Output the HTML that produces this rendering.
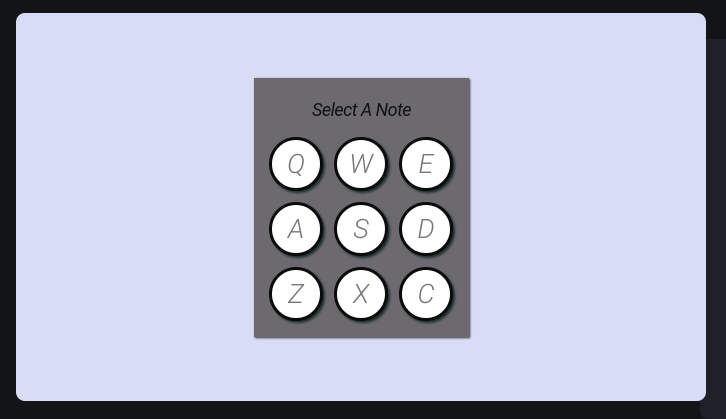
<!DOCTYPE html>
<html><head><style>
body{margin:0;width:726px;height:413px;background:#131418;overflow:hidden;position:relative;font-family:"Roboto","Liberation Sans",sans-serif}
.bg2{position:absolute;left:700px;top:39px;width:40px;height:380px;background:#1f2028;border-radius:8px}
.card{position:absolute;left:16px;top:13px;width:690px;height:388px;background:#d8dcf5;border-radius:9px}
.panel{position:absolute;left:254px;top:78px;width:215px;height:259px;background:#6c6a6e;box-shadow:1px 1px 2px #333}
.title{position:absolute;left:0;right:0;top:22px;text-align:center;font-style:italic;font-size:18px;color:#111;letter-spacing:-0.5px}
.b{position:absolute;width:48px;height:48px;border:3px solid #0b0b0b;border-radius:50%;background:#fff;box-shadow:2px 2px 2px #1f3030;text-align:center;line-height:48px;font-size:27px;font-style:italic;color:#777;font-weight:300}
</style></head><body>
<div class="bg2"></div>
<div class="card"></div>
<div class="panel">
<div class="title">Select A Note</div>
<div class="b" style="left:15px;top:59px">Q</div>
<div class="b" style="left:80px;top:59px">W</div>
<div class="b" style="left:145px;top:59px">E</div>
<div class="b" style="left:15px;top:124px">A</div>
<div class="b" style="left:80px;top:124px">S</div>
<div class="b" style="left:145px;top:124px">D</div>
<div class="b" style="left:15px;top:189px">Z</div>
<div class="b" style="left:80px;top:189px">X</div>
<div class="b" style="left:145px;top:189px">C</div>
</div>
</body></html>
